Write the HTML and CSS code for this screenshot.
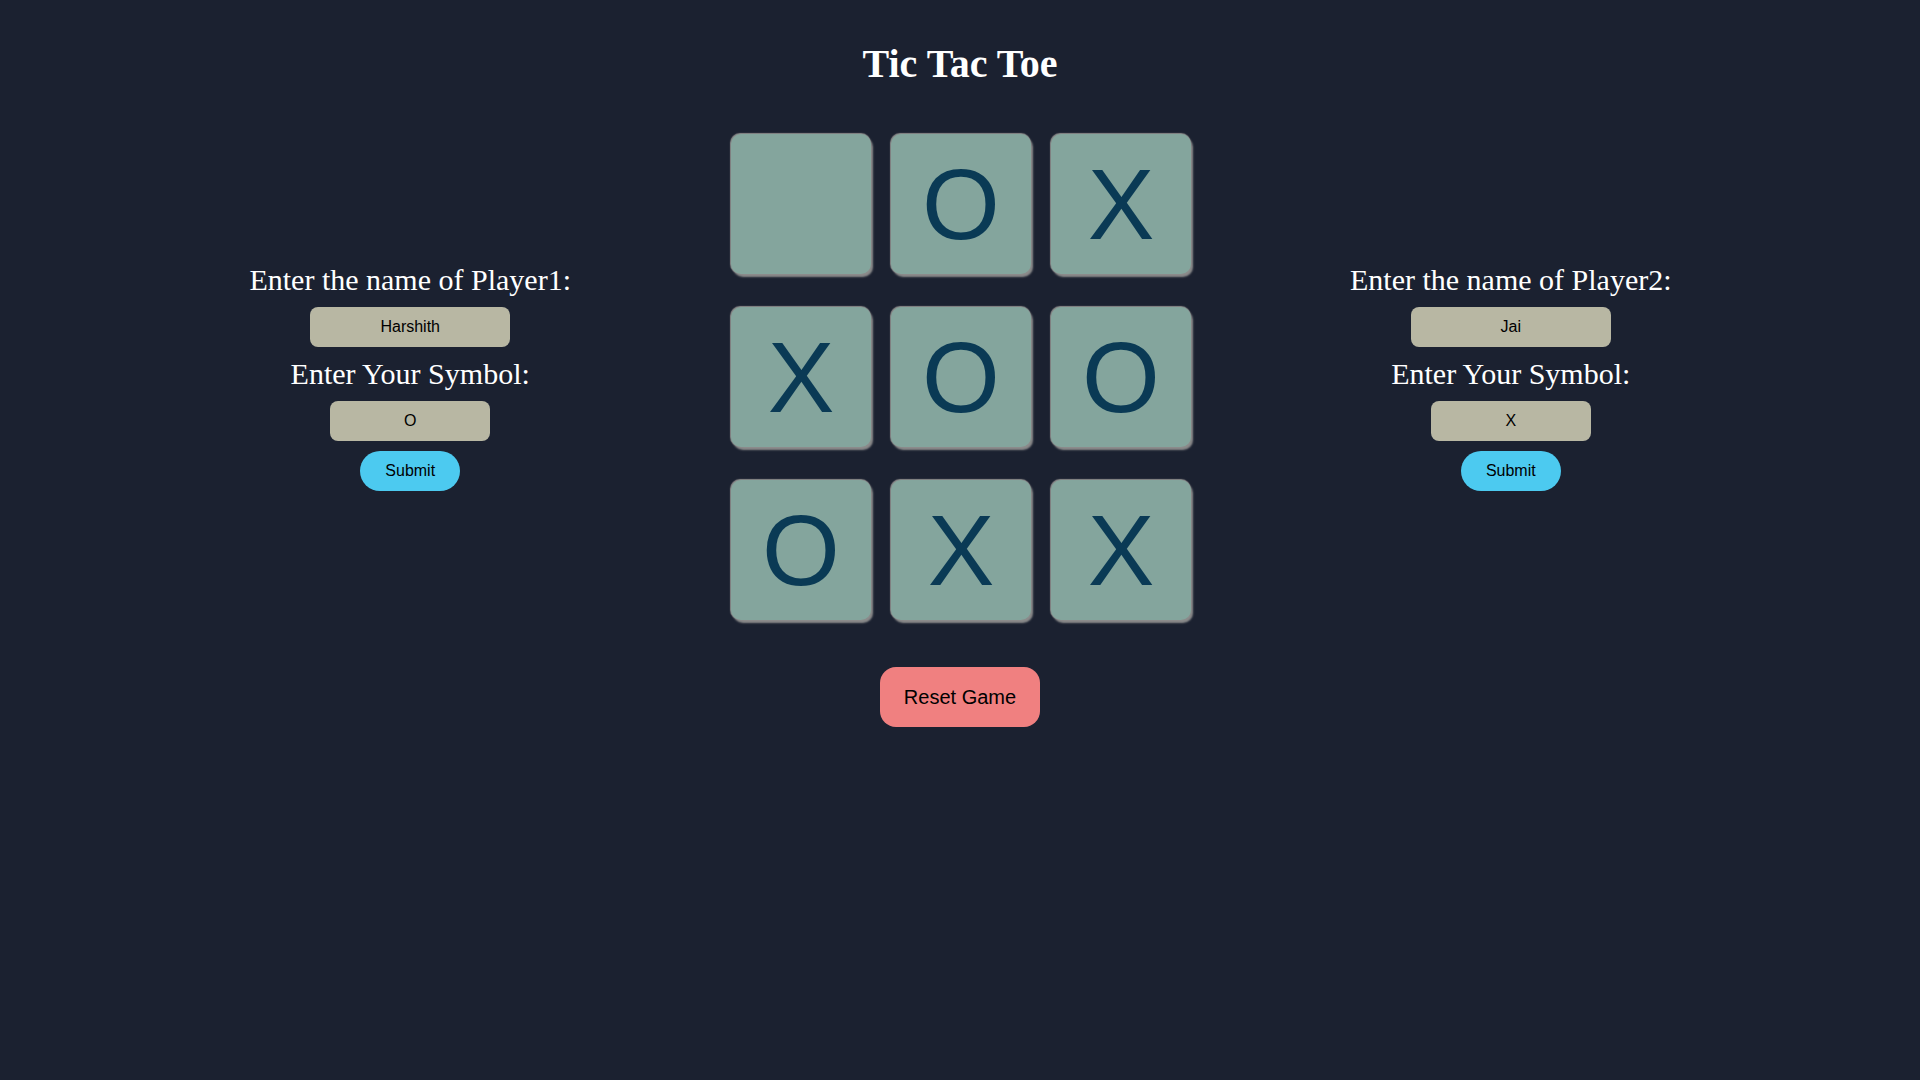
FILE: index.html
```html
<!DOCTYPE html>
<html lang="en">
<head>
<meta charset="utf-8">
<title>Tic Tac Toe</title>
<link rel="stylesheet" href="styles.css">
</head>
<body>
<h1 class="title">Tic Tac Toe</h1>
<main class="game">
  <section class="player player-left">
    <label class="label">Enter the name of Player1:</label>
    <input class="name-input" type="text" value="Harshith">
    <label class="label">Enter Your Symbol:</label>
    <input class="symbol-input" type="text" value="O">
    <button class="submit">Submit</button>
  </section>
  <section class="board">
    <button class="cell"></button>
    <button class="cell">O</button>
    <button class="cell">X</button>
    <button class="cell">X</button>
    <button class="cell">O</button>
    <button class="cell">O</button>
    <button class="cell">O</button>
    <button class="cell">X</button>
    <button class="cell">X</button>
  </section>
  <section class="player">
    <label class="label">Enter the name of Player2:</label>
    <input class="name-input" type="text" value="Jai">
    <label class="label">Enter Your Symbol:</label>
    <input class="symbol-input" type="text" value="X">
    <button class="submit">Submit</button>
  </section>
</main>
<div class="reset-wrap">
  <button class="reset">Reset Game</button>
</div>
</body>
</html>
```
FILE: styles.css
```css
html, body {
  margin: 0;
  padding: 0;
  background: #1b2130;
}
body {
  min-height: 1080px;
  font-family: "Liberation Serif", "Times New Roman", serif;
  color: #ffffff;
}
.title {
  margin: 0;
  padding-top: 41px;
  font-size: 40px;
  line-height: 46px;
  font-weight: bold;
  text-align: center;
}
.game {
  display: flex;
  justify-content: center;
  align-items: center;
  gap: 159px;
  margin-top: 47px;
  padding-left: 1px;
}
.player {
  display: flex;
  flex-direction: column;
  align-items: center;
  gap: 10px;
}
.player-left {
  margin-right: 1px;
}
.label {
  font-size: 30px;
  line-height: 34px;
  white-space: nowrap;
}
.name-input, .symbol-input {
  box-sizing: border-box;
  height: 40px;
  border: none;
  border-radius: 8px;
  background: #b8b7a3;
  color: #000;
  font-family: "Liberation Sans", Arial, sans-serif;
  font-size: 16px;
  text-align: center;
  padding: 0;
  outline: none;
}
.name-input { width: 200px; }
.symbol-input { width: 160px; }
.submit {
  width: 100px;
  height: 40px;
  border: none;
  border-radius: 20px;
  background: #4ccaf0;
  color: #000;
  font-family: "Liberation Sans", Arial, sans-serif;
  font-size: 16px;
  padding: 0;
}
.board {
  display: grid;
  grid-template-columns: repeat(3, 140px);
  grid-template-rows: repeat(3, 140px);
  column-gap: 20px;
  row-gap: 33px;
}
.cell {
  width: 140px;
  height: 140px;
  border: none;
  border-radius: 10px;
  background: #84a59d;
  box-shadow: 2px 3px 2px #8b8b8b, -0.5px -0.5px 1px #8b8b8b;
  color: #0a3a55;
  font-family: "Liberation Sans", Arial, sans-serif;
  font-size: 100px;
  line-height: 140px;
  padding: 0;
}
.reset-wrap {
  display: flex;
  justify-content: center;
  margin-top: 47px;
}
.reset {
  width: 160px;
  height: 60px;
  border: none;
  border-radius: 16px;
  background: #f08080;
  color: #000;
  font-family: "Liberation Sans", Arial, sans-serif;
  font-size: 20px;
  padding: 0;
}
```
